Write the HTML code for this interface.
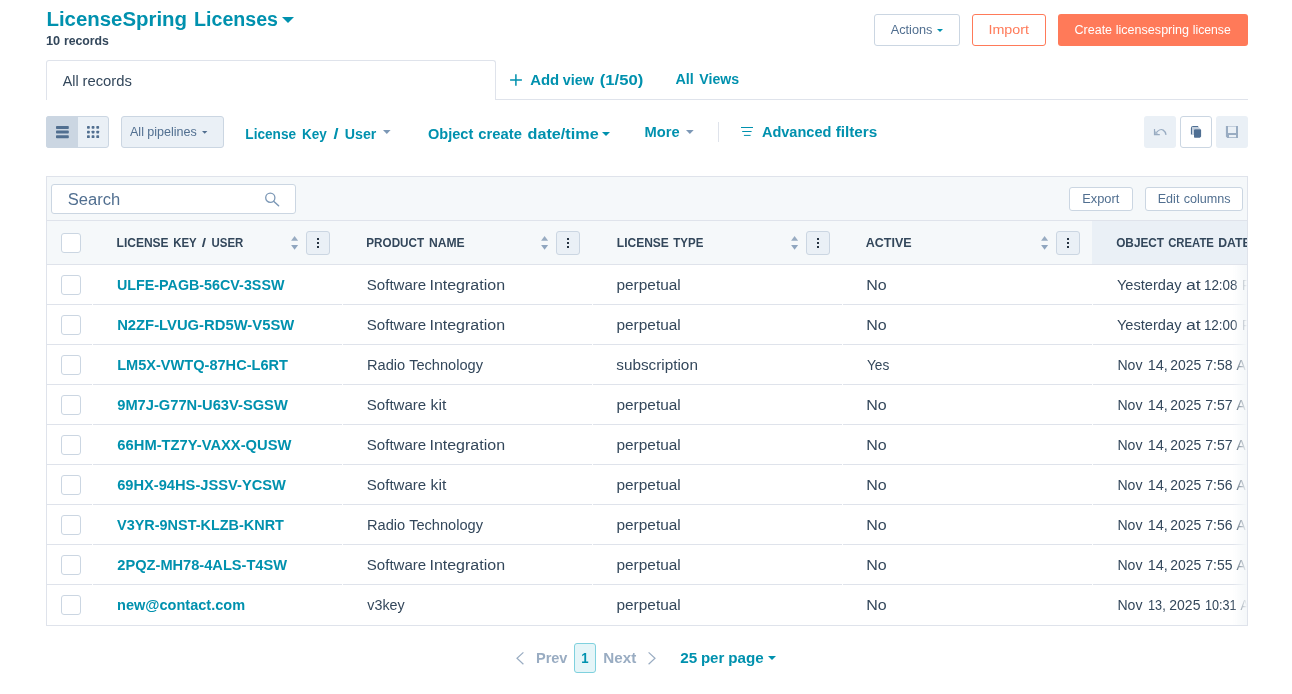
<!DOCTYPE html>
<html lang="en"><head><meta charset="utf-8"><title>LicenseSpring Licenses</title>
<style>
html,body{margin:0;padding:0;background:#fff;}
body{width:1292px;height:694px;position:relative;overflow:hidden;font-family:"Liberation Sans",sans-serif;}
.t{position:absolute;left:0;white-space:pre;line-height:40px;transform-origin:0 0;display:block;}.w{position:absolute;left:0;top:0;width:1292px;height:694px;will-change:transform;}.g{position:absolute;left:0;top:0;font-size:0;}
.b{position:absolute;box-sizing:border-box;}
svg{position:absolute;overflow:visible;}
</style></head>
<body>
<div class="b" style="left:874px;top:14px;width:86px;height:32px;border:1px solid #cbd6e2;border-radius:3px;background:#fff"></div>
<div class="b" style="left:972px;top:14px;width:74px;height:32px;border:1px solid #ff7a59;border-radius:3px;background:#fff"></div>
<div class="b" style="left:1058px;top:14px;width:190px;height:32px;border-radius:3px;background:#ff7a59"></div>
<div class="b" style="left:46px;top:99px;width:1202px;height:1px;background:#dfe3eb"></div>
<div class="b" style="left:46px;top:60px;width:450px;height:40px;border:1px solid #dfe3eb;border-bottom:none;border-radius:3px 3px 0 0;background:#fff"></div>
<div class="b" style="left:46px;top:116px;width:63px;height:32px;border:1px solid #cbd6e2;border-radius:3px;background:#eaf0f6"></div>
<div class="b" style="left:46px;top:116px;width:32px;height:32px;border-radius:3px 0 0 3px;background:#cbd6e2"></div>
<div class="b" style="left:121px;top:116px;width:103px;height:32px;border:1px solid #cbd6e2;border-radius:3px;background:#eaf0f6"></div>
<div class="b" style="left:718px;top:122px;width:1px;height:20px;background:#dfe3eb"></div>
<div class="b" style="left:1144px;top:116px;width:32px;height:32px;border-radius:3px;background:#eaf0f6"></div>
<div class="b" style="left:1180px;top:116px;width:32px;height:32px;border:1px solid #cbd6e2;border-radius:3px;background:#fff"></div>
<div class="b" style="left:1216px;top:116px;width:32px;height:32px;border-radius:3px;background:#eaf0f6"></div>
<div class="b" style="left:46px;top:176px;width:1202px;height:450px;border:1px solid #dfe3eb;background:#fff"></div>
<div class="b" style="left:47px;top:177px;width:1200px;height:43px;background:#f5f8fa"></div>
<div class="b" style="left:47px;top:220px;width:1200px;height:1px;background:#dfe3eb"></div>
<div class="b" style="left:47px;top:221px;width:1200px;height:43px;background:#f5f8fa"></div>
<div class="b" style="left:1092px;top:221px;width:155px;height:43px;background:#eaf0f6"></div>
<div class="b" style="left:47px;top:264px;width:1200px;height:1px;background:#dfe3eb"></div>
<div class="b" style="left:47px;top:304px;width:1200px;height:1px;background:#dfe3eb"></div>
<div class="b" style="left:47px;top:344px;width:1200px;height:1px;background:#dfe3eb"></div>
<div class="b" style="left:47px;top:384px;width:1200px;height:1px;background:#dfe3eb"></div>
<div class="b" style="left:47px;top:424px;width:1200px;height:1px;background:#dfe3eb"></div>
<div class="b" style="left:47px;top:464px;width:1200px;height:1px;background:#dfe3eb"></div>
<div class="b" style="left:47px;top:504px;width:1200px;height:1px;background:#dfe3eb"></div>
<div class="b" style="left:47px;top:544px;width:1200px;height:1px;background:#dfe3eb"></div>
<div class="b" style="left:47px;top:584px;width:1200px;height:1px;background:#dfe3eb"></div>
<div class="b" style="left:92px;top:265px;width:1px;height:359px;background:#fff"></div>
<div class="b" style="left:342px;top:265px;width:1px;height:359px;background:#fff"></div>
<div class="b" style="left:592px;top:265px;width:1px;height:359px;background:#fff"></div>
<div class="b" style="left:842px;top:265px;width:1px;height:359px;background:#fff"></div>
<div class="b" style="left:1092px;top:265px;width:1px;height:359px;background:#fff"></div>
<div class="b" style="left:51px;top:184px;width:245px;height:30px;border:1px solid #cbd6e2;border-radius:3px;background:#fff"></div>
<div class="b" style="left:1069px;top:187px;width:64px;height:24px;border:1px solid #cbd6e2;border-radius:3px;background:#fff"></div>
<div class="b" style="left:1145px;top:187px;width:98px;height:24px;border:1px solid #cbd6e2;border-radius:3px;background:#fff"></div>
<div class="b" style="left:61px;top:233px;width:20px;height:20px;border:1px solid #cbd6e2;border-radius:3px;background:#fff"></div>
<div class="b" style="left:61px;top:275px;width:20px;height:20px;border:1px solid #cbd6e2;border-radius:3px;background:#fff"></div>
<div class="b" style="left:61px;top:315px;width:20px;height:20px;border:1px solid #cbd6e2;border-radius:3px;background:#fff"></div>
<div class="b" style="left:61px;top:355px;width:20px;height:20px;border:1px solid #cbd6e2;border-radius:3px;background:#fff"></div>
<div class="b" style="left:61px;top:395px;width:20px;height:20px;border:1px solid #cbd6e2;border-radius:3px;background:#fff"></div>
<div class="b" style="left:61px;top:435px;width:20px;height:20px;border:1px solid #cbd6e2;border-radius:3px;background:#fff"></div>
<div class="b" style="left:61px;top:475px;width:20px;height:20px;border:1px solid #cbd6e2;border-radius:3px;background:#fff"></div>
<div class="b" style="left:61px;top:515px;width:20px;height:20px;border:1px solid #cbd6e2;border-radius:3px;background:#fff"></div>
<div class="b" style="left:61px;top:555px;width:20px;height:20px;border:1px solid #cbd6e2;border-radius:3px;background:#fff"></div>
<div class="b" style="left:61px;top:595px;width:20px;height:20px;border:1px solid #cbd6e2;border-radius:3px;background:#fff"></div>
<div class="b" style="left:306px;top:231px;width:24px;height:24px;border:1px solid #cbd6e2;border-radius:3px;background:#eaf0f6"></div>
<div class="b" style="left:317px;top:238px;width:2.4px;height:2.2px;background:#253342"></div>
<div class="b" style="left:317px;top:242px;width:2.4px;height:2.2px;background:#253342"></div>
<div class="b" style="left:317px;top:246px;width:2.4px;height:2.2px;background:#253342"></div>
<div class="b" style="left:556px;top:231px;width:24px;height:24px;border:1px solid #cbd6e2;border-radius:3px;background:#eaf0f6"></div>
<div class="b" style="left:567px;top:238px;width:2.4px;height:2.2px;background:#253342"></div>
<div class="b" style="left:567px;top:242px;width:2.4px;height:2.2px;background:#253342"></div>
<div class="b" style="left:567px;top:246px;width:2.4px;height:2.2px;background:#253342"></div>
<div class="b" style="left:806px;top:231px;width:24px;height:24px;border:1px solid #cbd6e2;border-radius:3px;background:#eaf0f6"></div>
<div class="b" style="left:817px;top:238px;width:2.4px;height:2.2px;background:#253342"></div>
<div class="b" style="left:817px;top:242px;width:2.4px;height:2.2px;background:#253342"></div>
<div class="b" style="left:817px;top:246px;width:2.4px;height:2.2px;background:#253342"></div>
<div class="b" style="left:1056px;top:231px;width:24px;height:24px;border:1px solid #cbd6e2;border-radius:3px;background:#eaf0f6"></div>
<div class="b" style="left:1067px;top:238px;width:2.4px;height:2.2px;background:#253342"></div>
<div class="b" style="left:1067px;top:242px;width:2.4px;height:2.2px;background:#253342"></div>
<div class="b" style="left:1067px;top:246px;width:2.4px;height:2.2px;background:#253342"></div>
<div class="b" style="left:574px;top:643px;width:22px;height:30px;border:1px solid #7fd1de;border-radius:3px;background:#e5f5f8"></div>
<svg style="left:291px;top:236px" width="8" height="14" viewBox="0 0 8 14"><path d="M0.1 4.8L3.6 0.1L7.1 4.8Z" fill="#99acc2"/><path d="M0.1 9L3.6 13.7L7.1 9Z" fill="#8fa5bf"/></svg>
<svg style="left:541px;top:236px" width="8" height="14" viewBox="0 0 8 14"><path d="M0.1 4.8L3.6 0.1L7.1 4.8Z" fill="#99acc2"/><path d="M0.1 9L3.6 13.7L7.1 9Z" fill="#8fa5bf"/></svg>
<svg style="left:791px;top:236px" width="8" height="14" viewBox="0 0 8 14"><path d="M0.1 4.8L3.6 0.1L7.1 4.8Z" fill="#99acc2"/><path d="M0.1 9L3.6 13.7L7.1 9Z" fill="#8fa5bf"/></svg>
<svg style="left:1041px;top:236px" width="8" height="14" viewBox="0 0 8 14"><path d="M0.1 4.8L3.6 0.1L7.1 4.8Z" fill="#99acc2"/><path d="M0.1 9L3.6 13.7L7.1 9Z" fill="#8fa5bf"/></svg>
<svg style="left:282px;top:17px" width="12" height="6" viewBox="0 0 12 6"><path d="M0 0H12L6.0 6Z" fill="#0091ae"/></svg>
<svg style="left:937px;top:29px" width="6" height="3" viewBox="0 0 6 3"><path d="M0 0H6L3.0 3Z" fill="#0091ae"/></svg>
<svg style="left:201.5px;top:130.7px" width="5.4" height="2.8" viewBox="0 0 5.4 2.8"><path d="M0 0H5.4L2.7 2.8Z" fill="#516f90"/></svg>
<svg style="left:383px;top:130px" width="7.6" height="4" viewBox="0 0 7.6 4"><path d="M0 0H7.6L3.8 4Z" fill="#7c98b6"/></svg>
<svg style="left:602px;top:132px" width="8" height="4" viewBox="0 0 8 4"><path d="M0 0H8L4.0 4Z" fill="#0091ae"/></svg>
<svg style="left:686px;top:130px" width="7.7" height="4" viewBox="0 0 7.7 4"><path d="M0 0H7.7L3.85 4Z" fill="#7c98b6"/></svg>
<svg style="left:768px;top:656px" width="8" height="4" viewBox="0 0 8 4"><path d="M0 0H8L4.0 4Z" fill="#0091ae"/></svg>
<svg style="left:510px;top:74px" width="12" height="12" viewBox="0 0 12 12"><path d="M5.9 0.2V11.8M0.1 6H11.9" stroke="#0091ae" stroke-width="1.5" fill="none"/></svg>
<svg style="left:740px;top:126px" width="14" height="11" viewBox="0 0 14 11"><path d="M1 1.5H13M2.2 5.5H11.6M3.9 9.4H10.6" stroke="#0091ae" stroke-width="1" fill="none"/></svg>
<svg style="left:55.7px;top:125.7px" width="13" height="13" viewBox="0 0 13 13"><g fill="#516f90"><rect x="0" y="0" width="12.8" height="3" rx=".8"/><rect x="0" y="4.6" width="12.8" height="3" rx=".8"/><rect x="0" y="9.2" width="12.8" height="3" rx=".8"/></g></svg>
<svg style="left:86.9px;top:125.8px" width="13" height="13" viewBox="0 0 13 13"><g fill="#516f90"><rect x="0" y="0" width="2.8" height="2.8" rx=".7"/><rect x="0" y="4.65" width="2.8" height="2.8" rx=".7"/><rect x="0" y="9.3" width="2.8" height="2.8" rx=".7"/><rect x="4.65" y="0" width="2.8" height="2.8" rx=".7"/><rect x="4.65" y="4.65" width="2.8" height="2.8" rx=".7"/><rect x="4.65" y="9.3" width="2.8" height="2.8" rx=".7"/><rect x="9.3" y="0" width="2.8" height="2.8" rx=".7"/><rect x="9.3" y="4.65" width="2.8" height="2.8" rx=".7"/><rect x="9.3" y="9.3" width="2.8" height="2.8" rx=".7"/></g></svg>
<svg style="left:264px;top:191px" width="16" height="16" viewBox="0 0 16 16"><circle cx="6.3" cy="6.7" r="4.6" fill="none" stroke="#7c98b6" stroke-width="1.3"/><path d="M9.6 10.2L14.6 14.7" stroke="#7c98b6" stroke-width="1.5" stroke-linecap="round"/></svg>
<svg style="left:0;top:0" width="1292" height="694" viewBox="0 0 1292 694"><path d="M1154.5 129V134.6H1159.8" fill="none" stroke="#99acc2" stroke-width="1.2"/><path d="M1154.5 130.6L1158.6 134.6H1154.5Z" fill="#99acc2" opacity=".75"/><path d="M1156.3 132.7C1158 130.3 1161 128.8 1163.2 130.1C1164.8 131.1 1165.7 132.8 1166 134.9" fill="none" stroke="#99acc2" stroke-width="1.3"/><path d="M1191.5 134.6V128.2Q1191.5 126.5 1193.2 126.5H1198.2" fill="none" stroke="#4f6f93" stroke-width="1.2"/><path d="M1192.1 127.1H1198.6L1200.6 129.2H1194V135H1192.1Z" fill="#c3cfdd"/><path d="M1194.8 129.2H1200.3Q1201.1 129.2 1201.1 130V136.6L1199.9 137.8H1194.8Q1194 137.8 1194 137V130Q1194 129.2 1194.8 129.2Z" fill="#4f6f93"/><path d="M1225.9 126H1238V138H1227.3L1225.9 136.6Z M1228 126.6H1236V133H1228Z M1229 135H1236V137.3H1229Z" fill="#99acc2" fill-rule="evenodd"/></svg>
<svg style="left:516px;top:652px" width="8" height="13" viewBox="0 0 8 13"><path d="M7.4 0.4L1 6.3L7.4 12.2" fill="none" stroke="#99acc2" stroke-width="1.2"/></svg>
<svg style="left:648px;top:652px" width="8" height="13" viewBox="0 0 8 13"><path d="M0.6 0.4L7 6.3L0.6 12.2" fill="none" stroke="#99acc2" stroke-width="1.2"/></svg>
<div class="w">
<span class="g"><span class="t" style="top:-1px;font-size:20px;font-weight:700;color:#0091ae;transform:translateX(46.42px) scaleX(1.0204)">LicenseSpring</span> <span class="t" style="top:-1px;font-size:20px;font-weight:700;color:#0091ae;transform:translateX(194.02px) scaleX(0.9815)">Licenses</span></span>
<span class="g"><span class="t" style="top:21px;font-size:12px;font-weight:700;color:#33475b;transform:translateX(45.97px) scaleX(1.0614)">10</span> <span class="t" style="top:21px;font-size:12px;font-weight:700;color:#33475b;transform:translateX(63.89px) scaleX(1.0235)">records</span></span>
<span class="t" style="top:10px;font-size:12px;font-weight:400;color:#516f90;transform:translateX(890.70px) scaleX(1.0614)">Actions</span>
<span class="t" style="top:10px;font-size:12px;font-weight:400;color:#ff7a59;transform:translateX(988.44px) scaleX(1.1919)">Import</span>
<span class="g"><span class="t" style="top:10px;font-size:12px;font-weight:400;color:#ffffff;transform:translateX(1074.49px) scaleX(1.0435)">Create</span> <span class="t" style="top:10px;font-size:12px;font-weight:400;color:#ffffff;transform:translateX(1115.76px) scaleX(1.0467)">licensespring</span> <span class="t" style="top:10px;font-size:12px;font-weight:400;color:#ffffff;transform:translateX(1192.73px) scaleX(1.0181)">license</span></span>
<span class="g"><span class="t" style="top:61px;font-size:14px;font-weight:400;color:#33475b;transform:translateX(62.83px) scaleX(1.0182)">All</span> <span class="t" style="top:61px;font-size:14px;font-weight:400;color:#33475b;transform:translateX(82.49px) scaleX(1.0589)">records</span></span>
<span class="g"><span class="t" style="top:60px;font-size:14px;font-weight:700;color:#0091ae;transform:translateX(530.21px) scaleX(1.0646)">Add</span> <span class="t" style="top:60px;font-size:14px;font-weight:700;color:#0091ae;transform:translateX(562.64px) scaleX(1.0272)">view</span> <span class="t" style="top:60px;font-size:14px;font-weight:700;color:#0091ae;transform:translateX(599.75px) scaleX(1.1887)">(1/50)</span></span>
<span class="g"><span class="t" style="top:59px;font-size:14px;font-weight:700;color:#0091ae;transform:translateX(675.41px) scaleX(1.0262)">All</span> <span class="t" style="top:59px;font-size:14px;font-weight:700;color:#0091ae;transform:translateX(699.35px) scaleX(1.0089)">Views</span></span>
<span class="g"><span class="t" style="top:112px;font-size:12.5px;font-weight:400;color:#516f90;transform:translateX(129.97px) scaleX(1.0042)">All</span> <span class="t" style="top:112px;font-size:12.5px;font-weight:400;color:#516f90;transform:translateX(147.17px) scaleX(1.0044)">pipelines</span></span>
<span class="g"><span class="t" style="top:114px;font-size:14px;font-weight:700;color:#0091ae;transform:translateX(245.37px) scaleX(0.9717)">License</span> <span class="t" style="top:114px;font-size:14px;font-weight:700;color:#0091ae;transform:translateX(302.04px) scaleX(0.9657)">Key</span> <span class="t" style="top:114px;font-size:14px;font-weight:700;color:#0091ae;transform:translateX(333.45px) scaleX(1.3000)">/</span> <span class="t" style="top:114px;font-size:14px;font-weight:700;color:#0091ae;transform:translateX(344.80px) scaleX(1.0147)">User</span></span>
<span class="g"><span class="t" style="top:114px;font-size:14px;font-weight:700;color:#0091ae;transform:translateX(428.07px) scaleX(1.0377)">Object</span> <span class="t" style="top:114px;font-size:14px;font-weight:700;color:#0091ae;transform:translateX(478.29px) scaleX(1.0568)">create</span> <span class="t" style="top:114px;font-size:14px;font-weight:700;color:#0091ae;transform:translateX(527.54px) scaleX(1.1577)">date/time</span></span>
<span class="t" style="top:112px;font-size:14px;font-weight:700;color:#0091ae;transform:translateX(644.56px) scaleX(1.0495)">More</span>
<span class="g"><span class="t" style="top:112px;font-size:14px;font-weight:700;color:#0091ae;transform:translateX(761.90px) scaleX(1.0386)">Advanced</span> <span class="t" style="top:112px;font-size:14px;font-weight:700;color:#0091ae;transform:translateX(835.65px) scaleX(1.0915)">filters</span></span>
<span class="t" style="top:180px;font-size:16px;font-weight:400;color:#516f90;transform:translateX(67.69px) scaleX(1.0348)">Search</span>
<span class="t" style="top:179px;font-size:12px;font-weight:400;color:#516f90;transform:translateX(1082.15px) scaleX(1.0696)">Export</span>
<span class="g"><span class="t" style="top:179px;font-size:12px;font-weight:400;color:#516f90;transform:translateX(1157.75px) scaleX(1.0451)">Edit</span> <span class="t" style="top:179px;font-size:12px;font-weight:400;color:#516f90;transform:translateX(1183.64px) scaleX(1.0517)">columns</span></span>
<span class="g"><span class="t" style="top:223px;font-size:12px;font-weight:700;color:#33475b;transform:translateX(116.60px) scaleX(1.0000)">LICENSE</span> <span class="t" style="top:223px;font-size:12px;font-weight:700;color:#33475b;transform:translateX(173.18px) scaleX(0.9549)">KEY</span> <span class="t" style="top:223px;font-size:12px;font-weight:700;color:#33475b;transform:translateX(201.79px) scaleX(1.3000)">/</span> <span class="t" style="top:223px;font-size:12px;font-weight:700;color:#33475b;transform:translateX(211.49px) scaleX(0.9530)">USER</span></span>
<span class="g"><span class="t" style="top:223px;font-size:12px;font-weight:700;color:#33475b;transform:translateX(366.28px) scaleX(0.9747)">PRODUCT</span> <span class="t" style="top:223px;font-size:12px;font-weight:700;color:#33475b;transform:translateX(428.90px) scaleX(1.0112)">NAME</span></span>
<span class="g"><span class="t" style="top:223px;font-size:12px;font-weight:700;color:#33475b;transform:translateX(616.80px) scaleX(1.0000)">LICENSE</span> <span class="t" style="top:223px;font-size:12px;font-weight:700;color:#33475b;transform:translateX(673.26px) scaleX(0.9591)">TYPE</span></span>
<span class="t" style="top:223px;font-size:12px;font-weight:700;color:#33475b;transform:translateX(865.76px) scaleX(1.0412)">ACTIVE</span>
<span class="t" style="top:265px;font-size:14px;font-weight:700;color:#0091ae;transform:translateX(116.97px) scaleX(1.0219)">ULFE-PAGB-56CV-3SSW</span>
<span class="g"><span class="t" style="top:265px;font-size:14px;font-weight:400;color:#33475b;transform:translateX(366.80px) scaleX(1.0748)">Software</span> <span class="t" style="top:265px;font-size:14px;font-weight:400;color:#33475b;transform:translateX(429.43px) scaleX(1.1430)">Integration</span></span>
<span class="t" style="top:265px;font-size:14px;font-weight:400;color:#33475b;transform:translateX(616.50px) scaleX(1.0997)">perpetual</span>
<span class="t" style="top:265px;font-size:14px;font-weight:400;color:#33475b;transform:translateX(866.24px) scaleX(1.1433)">No</span>
<span class="t" style="top:305px;font-size:14px;font-weight:700;color:#0091ae;transform:translateX(117.13px) scaleX(1.0577)">N2ZF-LVUG-RD5W-V5SW</span>
<span class="g"><span class="t" style="top:305px;font-size:14px;font-weight:400;color:#33475b;transform:translateX(366.80px) scaleX(1.0748)">Software</span> <span class="t" style="top:305px;font-size:14px;font-weight:400;color:#33475b;transform:translateX(429.43px) scaleX(1.1430)">Integration</span></span>
<span class="t" style="top:305px;font-size:14px;font-weight:400;color:#33475b;transform:translateX(616.50px) scaleX(1.0997)">perpetual</span>
<span class="t" style="top:305px;font-size:14px;font-weight:400;color:#33475b;transform:translateX(866.24px) scaleX(1.1433)">No</span>
<span class="t" style="top:345px;font-size:14px;font-weight:700;color:#0091ae;transform:translateX(117.14px) scaleX(1.0407)">LM5X-VWTQ-87HC-L6RT</span>
<span class="g"><span class="t" style="top:345px;font-size:14px;font-weight:400;color:#33475b;transform:translateX(366.96px) scaleX(1.0437)">Radio</span> <span class="t" style="top:345px;font-size:14px;font-weight:400;color:#33475b;transform:translateX(409.16px) scaleX(1.0422)">Technology</span></span>
<span class="t" style="top:345px;font-size:14px;font-weight:400;color:#33475b;transform:translateX(616.25px) scaleX(1.0929)">subscription</span>
<span class="t" style="top:345px;font-size:14px;font-weight:400;color:#33475b;transform:translateX(866.94px) scaleX(0.9783)">Yes</span>
<span class="t" style="top:385px;font-size:14px;font-weight:700;color:#0091ae;transform:translateX(117.21px) scaleX(1.0489)">9M7J-G77N-U63V-SGSW</span>
<span class="g"><span class="t" style="top:385px;font-size:14px;font-weight:400;color:#33475b;transform:translateX(366.80px) scaleX(1.0748)">Software</span> <span class="t" style="top:385px;font-size:14px;font-weight:400;color:#33475b;transform:translateX(430.55px) scaleX(1.1214)">kit</span></span>
<span class="t" style="top:385px;font-size:14px;font-weight:400;color:#33475b;transform:translateX(616.50px) scaleX(1.0997)">perpetual</span>
<span class="t" style="top:385px;font-size:14px;font-weight:400;color:#33475b;transform:translateX(866.24px) scaleX(1.1433)">No</span>
<span class="t" style="top:425px;font-size:14px;font-weight:700;color:#0091ae;transform:translateX(117.36px) scaleX(1.0523)">66HM-TZ7Y-VAXX-QUSW</span>
<span class="g"><span class="t" style="top:425px;font-size:14px;font-weight:400;color:#33475b;transform:translateX(366.80px) scaleX(1.0748)">Software</span> <span class="t" style="top:425px;font-size:14px;font-weight:400;color:#33475b;transform:translateX(429.43px) scaleX(1.1430)">Integration</span></span>
<span class="t" style="top:425px;font-size:14px;font-weight:400;color:#33475b;transform:translateX(616.50px) scaleX(1.0997)">perpetual</span>
<span class="t" style="top:425px;font-size:14px;font-weight:400;color:#33475b;transform:translateX(866.24px) scaleX(1.1433)">No</span>
<span class="t" style="top:465px;font-size:14px;font-weight:700;color:#0091ae;transform:translateX(117.13px) scaleX(1.0478)">69HX-94HS-JSSV-YCSW</span>
<span class="g"><span class="t" style="top:465px;font-size:14px;font-weight:400;color:#33475b;transform:translateX(366.80px) scaleX(1.0748)">Software</span> <span class="t" style="top:465px;font-size:14px;font-weight:400;color:#33475b;transform:translateX(430.55px) scaleX(1.1214)">kit</span></span>
<span class="t" style="top:465px;font-size:14px;font-weight:400;color:#33475b;transform:translateX(616.50px) scaleX(1.0997)">perpetual</span>
<span class="t" style="top:465px;font-size:14px;font-weight:400;color:#33475b;transform:translateX(866.24px) scaleX(1.1433)">No</span>
<span class="t" style="top:505px;font-size:14px;font-weight:700;color:#0091ae;transform:translateX(117.03px) scaleX(1.0316)">V3YR-9NST-KLZB-KNRT</span>
<span class="g"><span class="t" style="top:505px;font-size:14px;font-weight:400;color:#33475b;transform:translateX(366.96px) scaleX(1.0437)">Radio</span> <span class="t" style="top:505px;font-size:14px;font-weight:400;color:#33475b;transform:translateX(409.16px) scaleX(1.0422)">Technology</span></span>
<span class="t" style="top:505px;font-size:14px;font-weight:400;color:#33475b;transform:translateX(616.50px) scaleX(1.0997)">perpetual</span>
<span class="t" style="top:505px;font-size:14px;font-weight:400;color:#33475b;transform:translateX(866.24px) scaleX(1.1433)">No</span>
<span class="t" style="top:545px;font-size:14px;font-weight:700;color:#0091ae;transform:translateX(117.36px) scaleX(1.0435)">2PQZ-MH78-4ALS-T4SW</span>
<span class="g"><span class="t" style="top:545px;font-size:14px;font-weight:400;color:#33475b;transform:translateX(366.80px) scaleX(1.0748)">Software</span> <span class="t" style="top:545px;font-size:14px;font-weight:400;color:#33475b;transform:translateX(429.43px) scaleX(1.1430)">Integration</span></span>
<span class="t" style="top:545px;font-size:14px;font-weight:400;color:#33475b;transform:translateX(616.50px) scaleX(1.0997)">perpetual</span>
<span class="t" style="top:545px;font-size:14px;font-weight:400;color:#33475b;transform:translateX(866.24px) scaleX(1.1433)">No</span>
<span class="t" style="top:585px;font-size:14px;font-weight:700;color:#0091ae;transform:translateX(117.12px) scaleX(1.0373)">new@contact.com</span>
<span class="t" style="top:585px;font-size:14px;font-weight:400;color:#33475b;transform:translateX(367.33px) scaleX(1.0207)">v3key</span>
<span class="t" style="top:585px;font-size:14px;font-weight:400;color:#33475b;transform:translateX(616.50px) scaleX(1.0997)">perpetual</span>
<span class="t" style="top:585px;font-size:14px;font-weight:400;color:#33475b;transform:translateX(866.24px) scaleX(1.1433)">No</span>
<span class="t" style="top:638px;font-size:14px;font-weight:700;color:#99acc2;transform:translateX(535.93px) scaleX(1.0386)">Prev</span>
<span class="t" style="top:638px;font-size:14px;font-weight:700;color:#0091ae;transform:translateX(581.14px) scaleX(0.9427)">1</span>
<span class="t" style="top:638px;font-size:14px;font-weight:700;color:#99acc2;transform:translateX(603.32px) scaleX(1.0854)">Next</span>
<span class="g"><span class="t" style="top:638px;font-size:14px;font-weight:700;color:#0091ae;transform:translateX(680.16px) scaleX(1.0915)">25</span> <span class="t" style="top:638px;font-size:14px;font-weight:700;color:#0091ae;transform:translateX(700.92px) scaleX(1.0753)">per</span> <span class="t" style="top:638px;font-size:14px;font-weight:700;color:#0091ae;transform:translateX(728.28px) scaleX(1.0843)">page</span></span>
<div class="b" style="left:0;top:0;width:1247px;height:694px;overflow:hidden"><span class="g"><span class="t" style="top:223px;font-size:12px;font-weight:700;color:#33475b;transform:translateX(1116.16px) scaleX(0.9845)">OBJECT</span> <span class="t" style="top:223px;font-size:12px;font-weight:700;color:#33475b;transform:translateX(1168.18px) scaleX(0.9442)">CREATE</span> <span class="t" style="top:223px;font-size:12px;font-weight:700;color:#33475b;transform:translateX(1218.13px) scaleX(1.0208)">DATE/TIME</span></span>
<span class="g"><span class="t" style="top:265px;font-size:14px;font-weight:400;color:#33475b;transform:translateX(1116.91px) scaleX(1.0454)">Yesterday</span> <span class="t" style="top:265px;font-size:14px;font-weight:400;color:#33475b;transform:translateX(1186.02px) scaleX(1.2591)">at</span> <span class="t" style="top:265px;font-size:14px;font-weight:400;color:#33475b;transform:translateX(1203.92px) scaleX(0.9585)">12:08</span> <span class="t" style="top:265px;font-size:14px;font-weight:400;color:#33475b;transform:translateX(1241.90px) scaleX(0.9659)">PM</span></span>
<span class="g"><span class="t" style="top:305px;font-size:14px;font-weight:400;color:#33475b;transform:translateX(1116.91px) scaleX(1.0454)">Yesterday</span> <span class="t" style="top:305px;font-size:14px;font-weight:400;color:#33475b;transform:translateX(1186.02px) scaleX(1.2591)">at</span> <span class="t" style="top:305px;font-size:14px;font-weight:400;color:#33475b;transform:translateX(1203.88px) scaleX(0.9584)">12:00</span> <span class="t" style="top:305px;font-size:14px;font-weight:400;color:#33475b;transform:translateX(1241.93px) scaleX(0.9575)">PM</span></span>
<span class="g"><span class="t" style="top:345px;font-size:14px;font-weight:400;color:#33475b;transform:translateX(1117.41px) scaleX(1.0063)">Nov</span> <span class="t" style="top:345px;font-size:14px;font-weight:400;color:#33475b;transform:translateX(1147.69px) scaleX(1.0345)">14,</span> <span class="t" style="top:345px;font-size:14px;font-weight:400;color:#33475b;transform:translateX(1170.35px) scaleX(0.9956)">2025</span> <span class="t" style="top:345px;font-size:14px;font-weight:400;color:#33475b;transform:translateX(1205.30px) scaleX(0.9976)">7:58</span> <span class="t" style="top:345px;font-size:14px;font-weight:400;color:#33475b;transform:translateX(1236.56px) scaleX(0.9976)">AM</span></span>
<span class="g"><span class="t" style="top:385px;font-size:14px;font-weight:400;color:#33475b;transform:translateX(1117.41px) scaleX(1.0063)">Nov</span> <span class="t" style="top:385px;font-size:14px;font-weight:400;color:#33475b;transform:translateX(1147.69px) scaleX(1.0345)">14,</span> <span class="t" style="top:385px;font-size:14px;font-weight:400;color:#33475b;transform:translateX(1170.35px) scaleX(0.9956)">2025</span> <span class="t" style="top:385px;font-size:14px;font-weight:400;color:#33475b;transform:translateX(1205.16px) scaleX(1.0084)">7:57</span> <span class="t" style="top:385px;font-size:14px;font-weight:400;color:#33475b;transform:translateX(1236.53px) scaleX(0.9894)">AM</span></span>
<span class="g"><span class="t" style="top:425px;font-size:14px;font-weight:400;color:#33475b;transform:translateX(1117.41px) scaleX(1.0063)">Nov</span> <span class="t" style="top:425px;font-size:14px;font-weight:400;color:#33475b;transform:translateX(1147.69px) scaleX(1.0345)">14,</span> <span class="t" style="top:425px;font-size:14px;font-weight:400;color:#33475b;transform:translateX(1170.35px) scaleX(0.9956)">2025</span> <span class="t" style="top:425px;font-size:14px;font-weight:400;color:#33475b;transform:translateX(1205.16px) scaleX(1.0084)">7:57</span> <span class="t" style="top:425px;font-size:14px;font-weight:400;color:#33475b;transform:translateX(1236.53px) scaleX(0.9894)">AM</span></span>
<span class="g"><span class="t" style="top:465px;font-size:14px;font-weight:400;color:#33475b;transform:translateX(1117.41px) scaleX(1.0063)">Nov</span> <span class="t" style="top:465px;font-size:14px;font-weight:400;color:#33475b;transform:translateX(1147.69px) scaleX(1.0345)">14,</span> <span class="t" style="top:465px;font-size:14px;font-weight:400;color:#33475b;transform:translateX(1170.35px) scaleX(0.9956)">2025</span> <span class="t" style="top:465px;font-size:14px;font-weight:400;color:#33475b;transform:translateX(1205.31px) scaleX(0.9972)">7:56</span> <span class="t" style="top:465px;font-size:14px;font-weight:400;color:#33475b;transform:translateX(1236.56px) scaleX(0.9972)">AM</span></span>
<span class="g"><span class="t" style="top:505px;font-size:14px;font-weight:400;color:#33475b;transform:translateX(1117.41px) scaleX(1.0063)">Nov</span> <span class="t" style="top:505px;font-size:14px;font-weight:400;color:#33475b;transform:translateX(1147.69px) scaleX(1.0345)">14,</span> <span class="t" style="top:505px;font-size:14px;font-weight:400;color:#33475b;transform:translateX(1170.35px) scaleX(0.9956)">2025</span> <span class="t" style="top:505px;font-size:14px;font-weight:400;color:#33475b;transform:translateX(1205.31px) scaleX(0.9972)">7:56</span> <span class="t" style="top:505px;font-size:14px;font-weight:400;color:#33475b;transform:translateX(1236.56px) scaleX(0.9972)">AM</span></span>
<span class="g"><span class="t" style="top:545px;font-size:14px;font-weight:400;color:#33475b;transform:translateX(1117.41px) scaleX(1.0063)">Nov</span> <span class="t" style="top:545px;font-size:14px;font-weight:400;color:#33475b;transform:translateX(1147.69px) scaleX(1.0345)">14,</span> <span class="t" style="top:545px;font-size:14px;font-weight:400;color:#33475b;transform:translateX(1170.35px) scaleX(0.9956)">2025</span> <span class="t" style="top:545px;font-size:14px;font-weight:400;color:#33475b;transform:translateX(1205.32px) scaleX(0.9983)">7:55</span> <span class="t" style="top:545px;font-size:14px;font-weight:400;color:#33475b;transform:translateX(1236.56px) scaleX(0.9983)">AM</span></span>
<span class="g"><span class="t" style="top:585px;font-size:14px;font-weight:400;color:#33475b;transform:translateX(1117.41px) scaleX(1.0063)">Nov</span> <span class="t" style="top:585px;font-size:14px;font-weight:400;color:#33475b;transform:translateX(1148.06px) scaleX(0.9056)">13,</span> <span class="t" style="top:585px;font-size:14px;font-weight:400;color:#33475b;transform:translateX(1169.31px) scaleX(0.9985)">2025</span> <span class="t" style="top:585px;font-size:14px;font-weight:400;color:#33475b;transform:translateX(1205.01px) scaleX(0.9010)">10:31</span> <span class="t" style="top:585px;font-size:14px;font-weight:400;color:#33475b;transform:translateX(1240.52px) scaleX(0.9045)">AM</span></span></div>
</div>
<div class="b" style="left:1232px;top:265px;width:15px;height:360px;background:linear-gradient(to right,rgba(245,248,250,0),rgba(245,248,250,1))"></div>
</body></html>
